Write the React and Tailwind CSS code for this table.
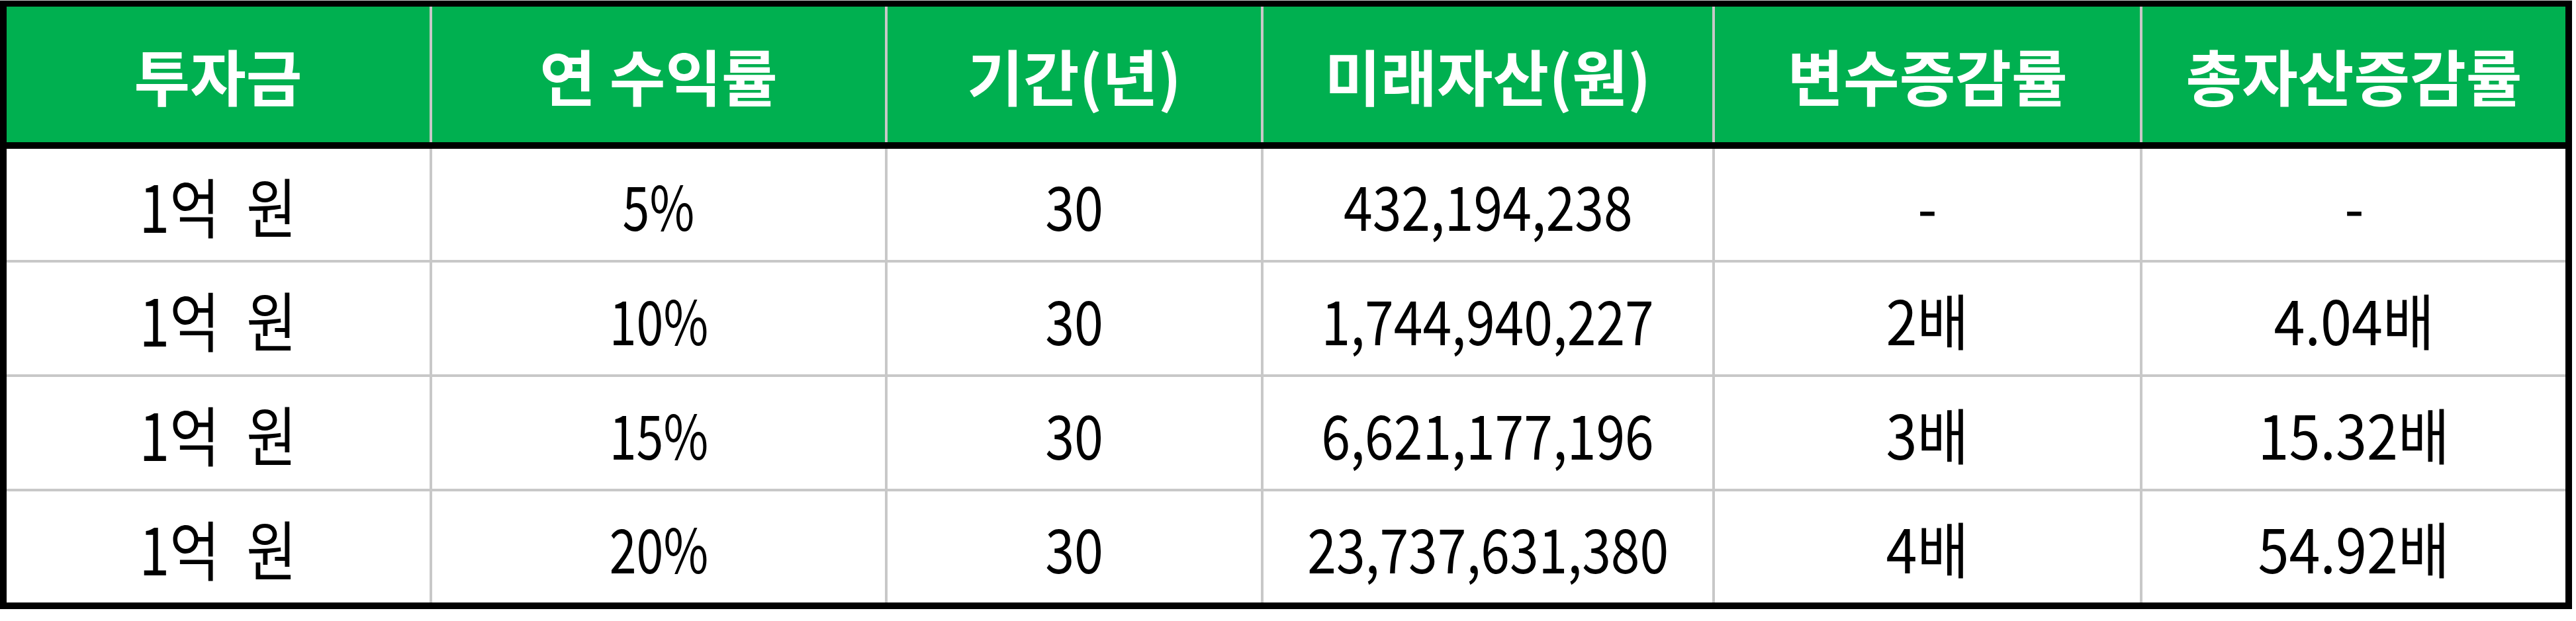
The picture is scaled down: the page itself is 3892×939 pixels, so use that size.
const headers = ['투자금', '연 수익률', '기간(년)', '미래자산(원)', '변수증감률', '총자산증감률']

const rows = [
  ['1억 원', '5%', '30', '432,194,238', '-', '-'],
  ['1억 원', '10%', '30', '1,744,940,227', '2배', '4.04배'],
  ['1억 원', '15%', '30', '6,621,177,196', '3배', '15.32배'],
  ['1억 원', '20%', '30', '23,737,631,380', '4배', '54.92배'],
]

// per column text style (the sheet uses a narrow font, so squeeze Noto a bit)
const cellText = [
  'text-[98px] scale-x-[0.84] [word-spacing:26px]',
  'text-[92px] scale-x-[0.8]',
  'text-[92px] scale-x-[0.86]',
  'text-[92px] scale-x-[0.855]',
  'text-[92px] scale-x-[0.92]',
  'text-[92px] scale-x-[0.92]',
]

const cols = 'grid grid-cols-[639px_684px_564px_678px_642px_639px] gap-x-[4px] bg-[#c8c8c8]'
const font = { fontFamily: '"Noto Sans CJK KR", "Noto Sans", sans-serif' }

export default function App() {
  return (
    <div className="w-[3892px] h-[939px] bg-white" style={font}>
      <div className="w-[3886px] border-t border-[#c8c8c8]">
        <div className="border-x-[10px] border-t-[9px] border-b-[10px] border-black">
          {/* header */}
          <div className={`${cols} border-b-[10px] border-black`}>
            {headers.map((h) => (
              <div key={h} className="h-[205px] bg-[#00b050] flex items-center justify-center text-white text-[92px] font-bold">
                {h}
              </div>
            ))}
          </div>

          {/* body */}
          <div className="flex flex-col gap-y-[4px] bg-[#c8c8c8]">
            {rows.map((r, i) => (
              <div key={i} className={`${cols} ${i === 0 || i === 3 ? 'h-[168px]' : 'h-[169px]'}`}>
                {r.map((c, j) => (
                  <div key={j} className="bg-white flex items-center justify-center text-black">
                    <span className={`inline-block whitespace-pre ${cellText[j]}`}>{c}</span>
                  </div>
                ))}
              </div>
            ))}
          </div>
        </div>
      </div>
    </div>
  )
}
